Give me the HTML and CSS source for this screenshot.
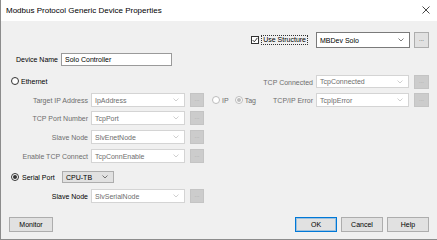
FILE: index.html
```html
<!DOCTYPE html>
<html>
<head>
  <meta charset="utf-8">
  <title>Modbus Protocol Generic Device Properties</title>
  <link rel="stylesheet" href="styles.css">
</head>
<body>
<div class="dialog">
  <div class="titlebar">
    <span class="title">Modbus Protocol Generic Device Properties</span>
    <svg class="close" width="8" height="8" viewBox="0 0 8 8"><path d="M0.5 0.5 L7.5 7.5 M7.5 0.5 L0.5 7.5" stroke="#333" stroke-width="0.9" fill="none"/></svg>
  </div>

  <div class="content">
    <div class="structure-row">
      <span class="checkbox"><svg width="6" height="6" viewBox="0 0 6 6"><polyline points="0.6,3 2.3,4.8 5.4,0.9" fill="none" stroke="#222" stroke-width="0.9"/></svg></span>
      <span class="focus">Use Structure</span>
      <div class="combo on big">
        <span>MBDev Solo</span>
        <svg width="6" height="4" viewBox="0 0 6 4"><polyline points="0.5,0.5 3,3 5.5,0.5" fill="none" stroke="currentColor" stroke-width="0.8"/></svg>
      </div>
      <div class="dots on big">...</div>
    </div>

    <div class="name-row">
      <span class="name-label">Device Name</span>
      <div class="textbox">Solo Controller</div>
    </div>

    <div class="grid">
      <!-- ethernet / tcp connected -->
      <div class="radio-line eth">
        <span class="radio"></span><span>Ethernet</span>
      </div>
      <div class="label off r1 c5">TCP Connected</div>
      <div class="combo off r1 c6"><span>TcpConnected</span><svg width="6" height="4" viewBox="0 0 6 4"><polyline points="0.5,0.5 3,3 5.5,0.5" fill="none" stroke="currentColor" stroke-width="0.8"/></svg></div>
      <div class="dots off r1 c7">...</div>

      <div class="label off r2 c1">Target IP Address</div>
      <div class="combo off r2 c2"><span>IpAddress</span><svg width="6" height="4" viewBox="0 0 6 4"><polyline points="0.5,0.5 3,3 5.5,0.5" fill="none" stroke="currentColor" stroke-width="0.8"/></svg></div>
      <div class="dots off r2 c3">...</div>
      <div class="iptag r2">
        <span class="radio off"></span><span class="grey">IP</span>
        <span class="radio off checked tag"></span><span class="grey">Tag</span>
      </div>
      <div class="label off r2 c5">TCP/IP Error</div>
      <div class="combo off r2 c6"><span>TcpIpError</span><svg width="6" height="4" viewBox="0 0 6 4"><polyline points="0.5,0.5 3,3 5.5,0.5" fill="none" stroke="currentColor" stroke-width="0.8"/></svg></div>
      <div class="dots off r2 c7">...</div>

      <div class="label off r3 c1">TCP Port Number</div>
      <div class="combo off r3 c2"><span>TcpPort</span><svg width="6" height="4" viewBox="0 0 6 4"><polyline points="0.5,0.5 3,3 5.5,0.5" fill="none" stroke="currentColor" stroke-width="0.8"/></svg></div>
      <div class="dots off r3 c3">...</div>

      <div class="label off r4 c1">Slave Node</div>
      <div class="combo off r4 c2"><span>SlvEnetNode</span><svg width="6" height="4" viewBox="0 0 6 4"><polyline points="0.5,0.5 3,3 5.5,0.5" fill="none" stroke="currentColor" stroke-width="0.8"/></svg></div>
      <div class="dots off r4 c3">...</div>

      <div class="label off r5 c1">Enable TCP Connect</div>
      <div class="combo off r5 c2"><span>TcpConnEnable</span><svg width="6" height="4" viewBox="0 0 6 4"><polyline points="0.5,0.5 3,3 5.5,0.5" fill="none" stroke="currentColor" stroke-width="0.8"/></svg></div>
      <div class="dots off r5 c3">...</div>

      <!-- serial -->
      <div class="radio-line serial">
        <span class="radio checked"></span><span class="serial-text">Serial Port</span>
        <div class="select"><span>CPU-TB</span><svg width="6" height="4" viewBox="0 0 6 4"><polyline points="0.5,0.5 3,3 5.5,0.5" fill="none" stroke="currentColor" stroke-width="0.8"/></svg></div>
      </div>

      <div class="label r7 c1">Slave Node</div>
      <div class="combo off r7 c2"><span>SlvSerialNode</span><svg width="6" height="4" viewBox="0 0 6 4"><polyline points="0.5,0.5 3,3 5.5,0.5" fill="none" stroke="currentColor" stroke-width="0.8"/></svg></div>
      <div class="dots off r7 c3">...</div>
    </div>

    <div class="buttons">
      <div class="btn monitor">Monitor</div>
      <div class="spacer"></div>
      <div class="btn default">OK</div>
      <div class="btn">Cancel</div>
      <div class="btn">Help</div>
    </div>
  </div>
</div>
</body>
</html>
```

FILE: styles.css
```css
* {
  box-sizing: border-box;
}

body {
  margin: 0;
  font-family: "Liberation Sans", Arial, sans-serif;
  font-size: 7px;
  color: #000;
  background: #f0f0f0;
}

.dialog {
  width: 437px;
  height: 240px;
  border-left: 1px solid #8c8c8c;
  border-bottom: 1px solid #8c8c8c;
  background: #f0f0f0;
  display: flex;
  flex-direction: column;
}

.titlebar {
  height: 21px;
  background: #fff;
  display: flex;
  align-items: center;
  padding: 0 7px 0 5px;
}

.title {
  flex: 1;
  font-size: 8px;
}

.close {
  display: block;
  margin-top: -1px;
}

.content {
  flex: 1;
  padding: 11px 8px 0 7px;
  display: flex;
  flex-direction: column;
}

/* top row */
.structure-row {
  height: 16px;
  display: flex;
  align-items: center;
  justify-content: flex-end;
}

.checkbox {
  width: 8px;
  height: 8px;
  border: 1px solid #333;
  background: #fff;
  display: flex;
  align-items: center;
  justify-content: center;
}

.checkbox svg {
  display: block;
}

.focus {
  margin-left: 2px;
  padding: 0 1px;
  height: 10px;
  line-height: 9px;
  outline: 1px dotted #333;
  outline-offset: -1px;
  padding: 0 2px;
  margin-right: 8px;
}

.name-row {
  margin-top: 5px;
  height: 13px;
  display: flex;
  align-items: center;
}

.name-label {
  margin-left: 8px;
  margin-right: 3px;
}

.textbox {
  width: 111px;
  height: 13px;
  background: #fff;
  border: 1px solid #9a9a9a;
  padding-left: 3px;
  line-height: 11px;
}

/* combo boxes and small buttons */
.combo {
  height: 14px;
  background: #fff;
  display: flex;
  align-items: center;
  justify-content: space-between;
  padding: 0 5px 0 3px;
  border: 1px solid #d4d4d4;
  color: #6d6d6d;
}

.combo svg {
  display: block;
  color: #c4c4c4;
}

.combo.on {
  border-color: #7a7a7a;
  color: #000;
}

.combo.on svg {
  color: #606060;
}

.combo.big {
  width: 94px;
  height: 16px;
  margin-right: 4px;
}

.dots {
  width: 14px;
  height: 14px;
  justify-self: end;
  background: #cccccc;
  border: 1px solid #c4c4c4;
  color: #a8a8a8;
  text-align: center;
  line-height: 11px;
  font-size: 6px;
}

.dots.on {
  background: #e1e1e1;
  border-color: #adadad;
  color: #333;
}

.dots.big {
  width: 15px;
  height: 16px;
  line-height: 13px;
}

/* grid of device settings */
.grid {
  margin-top: 9px;
  display: grid;
  grid-template-columns: 83px 94px 19px 58px 54px 93px 20px;
  grid-template-rows: 18px 18px 19px 19px 22px 18px 14px;
  align-items: start;
}

.r1 { grid-row: 1; }
.r2 { grid-row: 2; }
.r3 { grid-row: 3; }
.r4 { grid-row: 4; }
.r5 { grid-row: 5; }
.r7 { grid-row: 7; }

.c1 { grid-column: 1; }
.c2 { grid-column: 2; }
.c3 { grid-column: 3; }
.c5 { grid-column: 5; }
.c6 { grid-column: 6; }
.c7 { grid-column: 7; }

.c7 {
  width: 15px;
}

.r1.combo {
  height: 13px;
}

.label {
  height: 14px;
  display: flex;
  align-items: center;
  justify-content: flex-end;
  padding-right: 3px;
  white-space: nowrap;
}

.label.off,
.grey {
  color: #6d6d6d;
}

.radio {
  width: 8px;
  height: 8px;
  border-radius: 50%;
  border: 1px solid #333;
  background: #fff;
  display: flex;
  align-items: center;
  justify-content: center;
  flex: none;
}

.radio.checked::after {
  content: "";
  width: 4px;
  height: 4px;
  border-radius: 50%;
  background: #333;
}

.radio.off {
  border-color: #bcbcbc;
}

.radio.off.checked::after {
  background: #bcbcbc;
}

.radio-line {
  grid-column: 1 / 4;
  display: flex;
  align-items: center;
  gap: 2px;
  padding-left: 3px;
}

.eth {
  grid-row: 1;
  height: 12px;
}

.serial {
  grid-row: 6;
  height: 12px;
}

.serial-text {
  margin-left: 1px;
  width: 38px;
}

.select {
  width: 52px;
  height: 12px;
  background: #e1e1e1;
  border: 1px solid #adadad;
  display: flex;
  align-items: center;
  justify-content: space-between;
  padding: 0 5px 0 3px;
}

.select svg {
  display: block;
  color: #555;
}

.iptag {
  grid-column: 4;
  height: 14px;
  display: flex;
  align-items: center;
  gap: 2px;
  padding-left: 8px;
}

.tag {
  margin-left: 4px;
}

/* bottom buttons */
.buttons {
  margin-top: 14px;
  display: flex;
  gap: 4px;
}

.spacer {
  flex: 1;
}

.btn {
  width: 42px;
  height: 15px;
  background: #e1e1e1;
  border: 1px solid #adadad;
  text-align: center;
  line-height: 13px;
}

.monitor {
  width: 44px;
  margin-left: 1px;
}

.default {
  border-color: #0078d7;
  box-shadow: inset 0 0 0 1px rgba(0, 120, 215, 0.3);
}
```
